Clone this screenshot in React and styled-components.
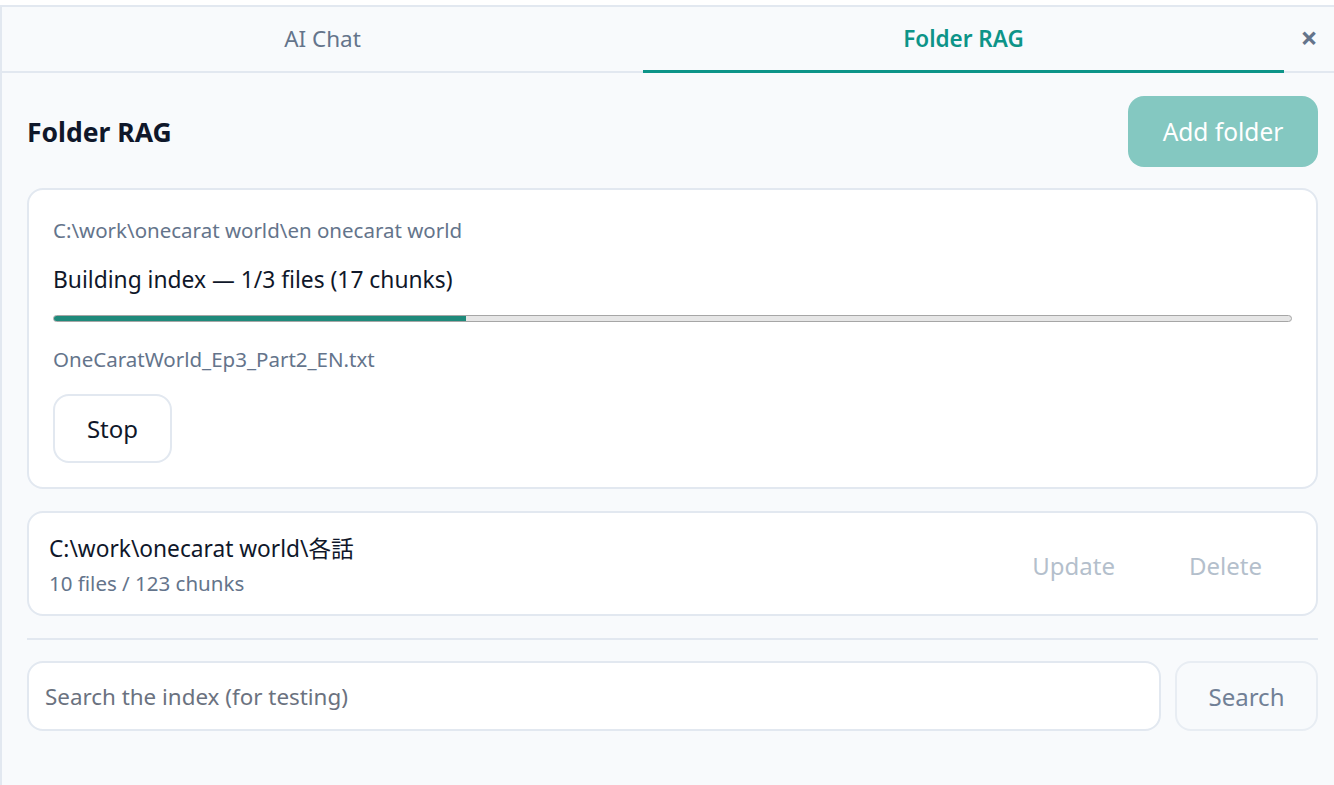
import React from 'react'
import styled, { createGlobalStyle, css } from 'styled-components'

const Global = createGlobalStyle`
  html, body {
    margin: 0;
    padding: 0;
    background: #ffffff;
  }
  body {
    font-family: "Noto Sans", "Noto Sans CJK JP", sans-serif;
  }
  * { box-sizing: border-box; }
`

const Panel = styled.div`
  margin-top: 5px;
  height: 780px;
  background: #f8fafc;
  border-top: 2px solid #e2e8f0;
  border-left: 2px solid #e2e8f0;
  display: flex;
  flex-direction: column;
`

const Tabs = styled.div`
  display: flex;
  height: 66px;
  border-bottom: 2px solid #e2e8f0;
`

const Tab = styled.div`
  flex: 1;
  display: flex;
  align-items: center;
  justify-content: center;
  font-size: 22.5px;
  color: #64748b;
  margin-bottom: -2px;
  border-bottom: 3px solid transparent;
  ${p => p.active && css`
    color: #0d9488;
    font-weight: 600;
    border-bottom-color: #0d9488;
  `}
`

const Close = styled.div`
  width: 50px;
  display: flex;
  align-items: center;
  justify-content: center;
  font-size: 30px;
  font-weight: 700;
  color: #64748b;
  padding-bottom: 4px;
`

const Body = styled.div`
  padding: 23px 16px 0 25px;
  display: flex;
  flex-direction: column;
`

const Header = styled.div`
  display: flex;
  justify-content: space-between;
  align-items: center;
  margin-bottom: 21px;
`

const Title = styled.h2`
  margin: 0;
  font-size: 26.5px;
  font-weight: 700;
  color: #0f172a;
`

const PrimaryButton = styled.button`
  font-family: inherit;
  width: 190px;
  height: 71px;
  border: none;
  border-radius: 16px;
  background: #84c8c1;
  color: #ffffff;
  font-size: 24.5px;
`

const Card = styled.div`
  background: #ffffff;
  border: 2px solid #e2e8f0;
  border-radius: 16px;
  ${p => p.progress ? css`
    padding: 26px 24px 24px 24px;
  ` : css`
    padding: 21px 20px 17px 20px;
    display: flex;
    align-items: center;
    justify-content: space-between;
  `}
  margin-bottom: 22px;
`

const Muted = styled.div`
  font-size: 20.5px;
  line-height: 28px;
  color: #64748b;
`

const Status = styled.div`
  font-size: 22.8px;
  line-height: 31px;
  color: #0f172a;
  margin-top: 20px;
`

const Track = styled.div`
  margin-top: 20px;
  height: 7px;
  border: 1px solid #a6a6a6;
  border-radius: 4px;
  background: #e6e6e6;
  overflow: hidden;
`

const Fill = styled.div`
  height: 100%;
  background: #1f8a7b;
`

const FileName = styled(Muted)`
  margin-top: 23px;
`

const Meta = styled(Muted)`
  margin-top: 5px;
`

const GhostButton = styled.button`
  font-family: inherit;
  margin-top: 21px;
  width: 119px;
  height: 69px;
  background: #ffffff;
  border: 2px solid #e2e8f0;
  border-radius: 16px;
  font-size: 24px;
  color: #0f172a;
`

const FolderName = styled.div`
  font-size: 22.7px;
  color: #0f172a;
  line-height: 30px;
`

const Actions = styled.div`
  display: flex;
  gap: 42px;
  margin-right: 18px;
`

const LinkButton = styled.button`
  font-family: inherit;
  background: none;
  border: none;
  padding: 0 16px;
  font-size: 24px;
  color: #b4bfcc;
`

const Divider = styled.hr`
  margin: 0 0 21px 0;
  border: none;
  border-top: 2px solid #e2e8f0;
`

const SearchRow = styled.div`
  display: flex;
  gap: 14px;
`

const SearchInput = styled.input`
  font-family: inherit;
  flex: 1;
  height: 70px;
  border: 2px solid #e2e8f0;
  border-radius: 16px;
  background: #ffffff;
  padding: 0 16px;
  font-size: 22.4px;
  color: #0f172a;
  &::placeholder { color: #6b7280; }
`

const SearchButton = styled.button`
  font-family: inherit;
  width: 143px;
  height: 70px;
  border: 2px solid #e8edf3;
  border-radius: 16px;
  background: #f8fafc;
  font-size: 24px;
  color: #718096;
`

export default function App() {
  const done = 1
  const total = 3
  return (
    <>
      <Global />
      <Panel>
        <Tabs>
          <Tab>AI Chat</Tab>
          <Tab active>Folder RAG</Tab>
          <Close>×</Close>
        </Tabs>
        <Body>
          <Header>
            <Title>Folder RAG</Title>
            <PrimaryButton>Add folder</PrimaryButton>
          </Header>
          <Card progress>
            <Muted>C:\work\onecarat world\en onecarat world</Muted>
            <Status>Building index — 1/3 files (17 chunks)</Status>
            <Track>
              <Fill style={{ width: `${(done / total) * 100}%` }} />
            </Track>
            <FileName>OneCaratWorld_Ep3_Part2_EN.txt</FileName>
            <GhostButton>Stop</GhostButton>
          </Card>
          <Card>
            <div>
              <FolderName>C:\work\onecarat world\各話</FolderName>
              <Meta>10 files / 123 chunks</Meta>
            </div>
            <Actions>
              <LinkButton>Update</LinkButton>
              <LinkButton>Delete</LinkButton>
            </Actions>
          </Card>
          <Divider />
          <SearchRow>
            <SearchInput placeholder="Search the index (for testing)" />
            <SearchButton>Search</SearchButton>
          </SearchRow>
        </Body>
      </Panel>
    </>
  )
}
